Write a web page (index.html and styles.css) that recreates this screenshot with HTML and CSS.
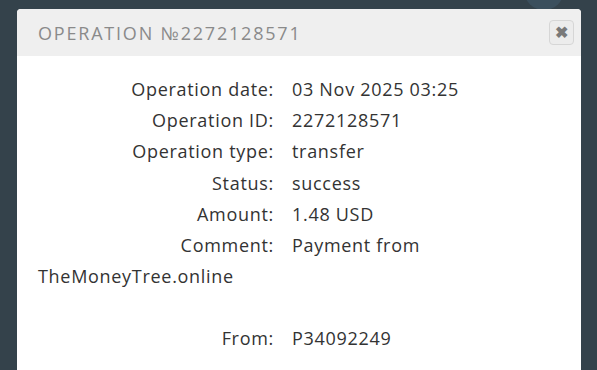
FILE: index.html
```html
<!DOCTYPE html>
<html lang="en">

<head>
    <meta charset="UTF-8">
    <meta name="viewport" content="width=device-width, initial-scale=1.0">
    <title>Operation</title>
    <link rel="stylesheet" href="styles.css">
</head>

<body>
    <div class="backdrop">
        <div class="avatar"></div>
    </div>

    <div class="modal">
        <div class="modal-header">
            <h3 class="modal-title">Operation №2272128571</h3>
            <button class="close" type="button">&#10006;</button>
        </div>

        <div class="modal-body">
            <div class="row"><span class="label">Operation date:</span>03 Nov 2025 03:25</div>
            <div class="row"><span class="label">Operation ID:</span>2272128571</div>
            <div class="row"><span class="label">Operation type:</span>transfer</div>
            <div class="row"><span class="label">Status:</span>success</div>
            <div class="row"><span class="label">Amount:</span>1.48 USD</div>
            <div class="row comment"><span class="label">Comment:</span>Payment from TheMoneyTree.online</div>
            <div class="row"><span class="label">From:</span>P34092249</div>
        </div>
    </div>
</body>
</html>
```

FILE: styles.css
```css
body {
    margin: 0;
    background-color: #34424b;
    font-family: "Open Sans", sans-serif;
    overflow: hidden;
}

/* page behind the overlay */
.backdrop {
    position: absolute;
    top: 0;
    left: 0;
    right: 0;
    height: 10px;
}

.avatar {
    position: absolute;
    top: -30px;
    left: 524px;
    width: 40px;
    height: 40px;
    border-radius: 50%;
    background-color: #3b4f5d;
}

.modal {
    position: relative;
    margin: 9px 0 0 17px;
    width: 564px;
    min-height: calc(100vh - 9px);
    background-color: #fff;
    border-radius: 4px 4px 0 0;
}

.modal-header {
    display: flex;
    align-items: center;
    justify-content: space-between;
    height: 47px;
    padding: 0 7px 0 21px;
    background-color: #efefef;
    border-radius: 4px 4px 0 0;
}

.modal-title {
    margin: 0;
    font-size: 18px;
    font-weight: normal;
    letter-spacing: 1.8px;
    text-transform: uppercase;
    color: #8a8a8a;
}

.close {
    width: 25px;
    height: 25px;
    padding: 0;
    border: 1px solid #d6d6d6;
    border-radius: 4px;
    background-color: #ececec;
    color: #7a7a7a;
    font-size: 16px;
    font-weight: bold;
    line-height: 22px;
    cursor: pointer;
}

.modal-body {
    padding: 18px 21px 0;
    font-size: 18px;
    letter-spacing: 0.7px;
    color: #333;
}

.row {
    line-height: 31.2px;
    clear: both;
}

.label {
    float: left;
    width: 236px;
    padding-right: 18px;
    text-align: right;
}

.comment {
    padding-bottom: 31px;
}
```
